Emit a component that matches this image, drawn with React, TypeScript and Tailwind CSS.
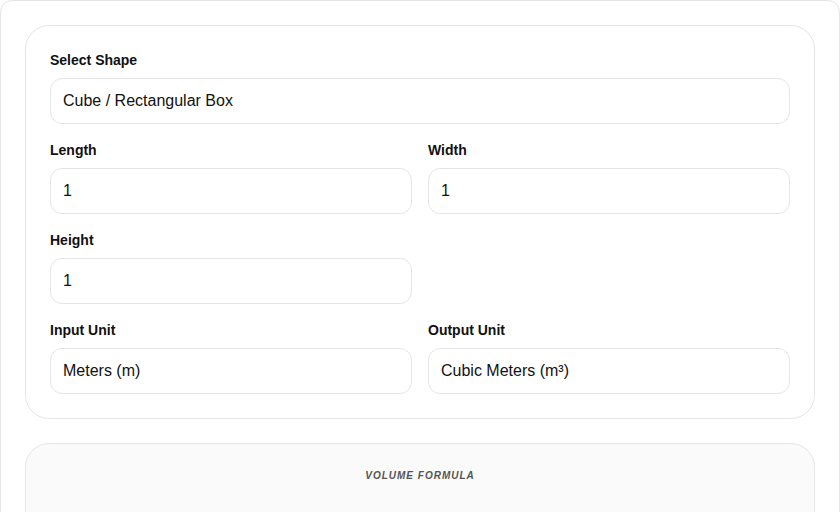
import React from "react";

function Field({ label, value }: { label: string; value: string }) {
  return (
    <div className="flex flex-col">
      <label className="mb-2 text-sm font-bold leading-5 text-[#111]">{label}</label>
      <div className="rounded-xl border border-[#e5e5e5] bg-white px-3 py-[10px] text-base leading-6 text-[#111]">
        {value}
      </div>
    </div>
  );
}

export default function App() {
  return (
    <div className="min-h-[512px] bg-white" style={{ fontFamily: '"Liberation Sans", Arial, sans-serif' }}>
      <div className="rounded-xl border border-[#e5e5e5] bg-white p-6 min-h-[560px]">
        <div className="rounded-3xl border border-[#e5e5e5] bg-white p-6 flex flex-col gap-4">
          <Field label="Select Shape" value="Cube / Rectangular Box" />
          <div className="grid grid-cols-2 gap-4">
            <Field label="Length" value="1" />
            <Field label="Width" value="1" />
            <Field label="Height" value="1" />
            <div />
            <Field label="Input Unit" value="Meters (m)" />
            <Field label="Output Unit" value="Cubic Meters (m³)" />
          </div>
        </div>
        <div className="mt-6 rounded-3xl border border-[#e5e5e5] bg-[#fafafa] p-6 h-[200px]">
          <div className="text-center text-[10px] leading-[15px] font-bold italic uppercase tracking-[1px] text-[#555]">
            Volume Formula
          </div>
        </div>
      </div>
    </div>
  );
}
